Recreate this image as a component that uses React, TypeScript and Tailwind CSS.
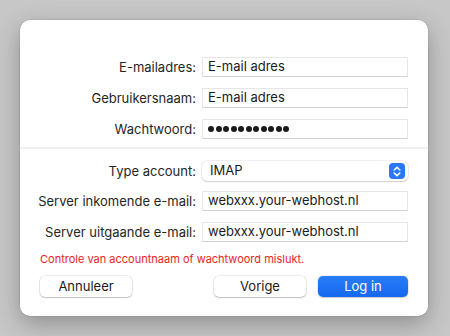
import React from "react";

const font = { fontFamily: 'Inter, "Liberation Sans", Arial, sans-serif' };

function Label({ children }: { children: React.ReactNode }) {
  return (
    <div className="w-[182px] shrink-0 pr-[6px] text-right text-[13px] leading-[20px] text-[#262626]">
      {children}
    </div>
  );
}

function Field({ value, dots }: { value?: string; dots?: boolean }) {
  return (
    <div className="flex h-[20px] w-[206px] items-center border border-[#e6e6e6] border-b-[#d2d2d2] bg-white pl-[5px] text-[13px] text-[#1a1a1a]">
      {dots ? (
        <span className="flex gap-[1.5px]">
          {Array.from({ length: 11 }).map((_, i) => (
            <span key={i} className="h-[6px] w-[6px] rounded-full bg-[#1a1a1a]" />
          ))}
        </span>
      ) : (
        value
      )}
    </div>
  );
}

export default function App() {
  return (
    <div className="h-[336px] w-[450px] overflow-hidden bg-[#c7c7c7] pt-[20px] pl-[20px]" style={font}>
      <div className="h-[296px] w-[408px] rounded-[10px] bg-white shadow-[0_8px_24px_rgba(0,0,0,0.28),0_0_0_0.5px_rgba(0,0,0,0.12)]">
        <div className="flex flex-col gap-[11px] pt-[37px]">
          <div className="flex items-center">
            <Label>E-mailadres:</Label>
            <Field value="E-mail adres" />
          </div>
          <div className="flex items-center">
            <Label>Gebruikersnaam:</Label>
            <Field value="E-mail adres" />
          </div>
          <div className="flex items-center">
            <Label>Wachtwoord:</Label>
            <Field dots />
          </div>
        </div>
        <div className="mt-[8px] h-[2px] w-full bg-[#efefef]" />
        <div className="flex flex-col pt-[12px]">
          <div className="flex items-center">
            <Label>Type account:</Label>
            <div className="flex h-[20px] w-[206px] items-center justify-between rounded-[5px] bg-white pl-[8px] pr-[3px] text-[13px] text-[#1a1a1a] shadow-[0_0_0_0.5px_rgba(0,0,0,0.12),0_1px_1.5px_rgba(0,0,0,0.15)]">
              <span>IMAP</span>
              <span className="flex h-[16px] w-[16px] items-center justify-center rounded-[4px] bg-[#2a78f5]">
                <svg width="8" height="11" viewBox="0 0 8 11" fill="none" stroke="white" strokeWidth="1.6" strokeLinecap="round" strokeLinejoin="round">
                  <path d="M1.2 4 L4 1.3 L6.8 4" />
                  <path d="M1.2 7 L4 9.7 L6.8 7" />
                </svg>
              </span>
            </div>
          </div>
          <div className="mt-[10px] flex items-center">
            <Label>Server inkomende e-mail:</Label>
            <Field value="webxxx.your-webhost.nl" />
          </div>
          <div className="mt-[11px] flex items-center">
            <Label>Server uitgaande e-mail:</Label>
            <Field value="webxxx.your-webhost.nl" />
          </div>
          <div className="mt-[9px] pl-[20px] text-[11px] leading-[16px] text-[#e8251b]">
            Controle van accountnaam of wachtwoord mislukt.
          </div>
          <div className="mt-[9px] flex items-center px-[20px]">
            <button className="flex h-[21px] w-[92px] items-center justify-center rounded-[5px] bg-white text-[13px] text-[#1a1a1a] shadow-[0_0_0_0.5px_rgba(0,0,0,0.15),0_1px_1.5px_rgba(0,0,0,0.18)]">
              Annuleer
            </button>
            <div className="flex-1" />
            <button className="flex h-[21px] w-[92px] items-center justify-center rounded-[5px] bg-white text-[13px] text-[#1a1a1a] shadow-[0_0_0_0.5px_rgba(0,0,0,0.15),0_1px_1.5px_rgba(0,0,0,0.18)]">
              Vorige
            </button>
            <button className="ml-[12px] flex h-[21px] w-[90px] items-center justify-center rounded-[5px] bg-gradient-to-b from-[#2a7df7] to-[#1468ee] text-[13px] text-white shadow-[0_0_0_0.5px_rgba(0,0,0,0.1),0_1px_1.5px_rgba(0,0,0,0.18)]">
              Log in
            </button>
          </div>
        </div>
      </div>
    </div>
  );
}
